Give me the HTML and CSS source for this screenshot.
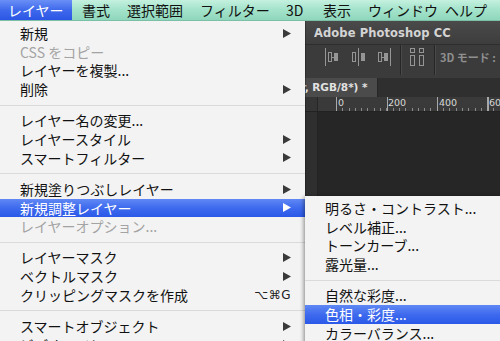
FILE: index.html
```html
<!DOCTYPE html>
<html lang="ja">
<head>
<meta charset="utf-8">
<link rel="stylesheet" href="styles.css">
</head>
<body>
<div class="screen">
  <div class="menubar">
    <span class="mb-item active">レイヤー</span>
    <span class="mb-item">書式</span>
    <span class="mb-item">選択範囲</span>
    <span class="mb-item">フィルター</span>
    <span class="mb-item">3D</span>
    <span class="mb-item">表示</span>
    <span class="mb-item">ウィンドウ</span>
    <span class="mb-item">ヘルプ</span>
  </div>
  <div class="below">
    <div class="menu">
      <div class="item"><span>新規</span><svg class="arrow" viewBox="0 0 8 9"><path d="M0 0 L8 4.5 L0 9 Z"/></svg></div>
      <div class="item disabled"><span>CSS をコピー</span></div>
      <div class="item"><span>レイヤーを複製...</span></div>
      <div class="item"><span>削除</span><svg class="arrow" viewBox="0 0 8 9"><path d="M0 0 L8 4.5 L0 9 Z"/></svg></div>
      <div class="sep"></div>
      <div class="item"><span>レイヤー名の変更...</span></div>
      <div class="item"><span>レイヤースタイル</span><svg class="arrow" viewBox="0 0 8 9"><path d="M0 0 L8 4.5 L0 9 Z"/></svg></div>
      <div class="item"><span>スマートフィルター</span><svg class="arrow" viewBox="0 0 8 9"><path d="M0 0 L8 4.5 L0 9 Z"/></svg></div>
      <div class="sep"></div>
      <div class="item"><span>新規塗りつぶしレイヤー</span><svg class="arrow" viewBox="0 0 8 9"><path d="M0 0 L8 4.5 L0 9 Z"/></svg></div>
      <div class="item selected"><span>新規調整レイヤー</span><svg class="arrow" viewBox="0 0 8 9"><path d="M0 0 L8 4.5 L0 9 Z"/></svg></div>
      <div class="item disabled"><span>レイヤーオプション...</span></div>
      <div class="sep"></div>
      <div class="item"><span>レイヤーマスク</span><svg class="arrow" viewBox="0 0 8 9"><path d="M0 0 L8 4.5 L0 9 Z"/></svg></div>
      <div class="item"><span>ベクトルマスク</span><svg class="arrow" viewBox="0 0 8 9"><path d="M0 0 L8 4.5 L0 9 Z"/></svg></div>
      <div class="item"><span>クリッピングマスクを作成</span><span class="shortcut">⌥⌘G</span></div>
      <div class="sep"></div>
      <div class="item"><span>スマートオブジェクト</span><svg class="arrow" viewBox="0 0 8 9"><path d="M0 0 L8 4.5 L0 9 Z"/></svg></div>
      <div class="item"><span>ビデオレイヤー</span><svg class="arrow" viewBox="0 0 8 9"><path d="M0 0 L8 4.5 L0 9 Z"/></svg></div>
    </div>
    <div class="ps">
      <div class="ps-title">Adobe Photoshop CC</div>
      <div class="ps-toolbar">
        <div class="tool t1">
          <i class="bar"></i><i class="box"></i><i class="tick"></i><i class="blk"></i>
        </div>
        <div class="tool t2">
          <i class="box"></i><i class="bar mid"></i><i class="blk"></i>
        </div>
        <div class="tool t3">
          <i class="box"></i><i class="tick"></i><i class="blk"></i><i class="bar end"></i>
        </div>
        <span class="vsep v1"></span>
        <div class="tool t4">
          <div class="col"><i class="sq"></i><i class="tall"></i></div>
          <div class="col"><i class="sq"></i><i class="tall"></i></div>
        </div>
        <span class="vsep v2"></span>
        <span class="mode">3D モード :</span>
      </div>
      <div class="ps-tabs">
        <div class="tab">r, RGB/8*) *</div>
      </div>
      <div class="ruler">
        <div class="ruler-corner"></div>
        <div class="ruler-scale">
          <span class="num n0">0</span>
          <span class="num n200">200</span>
          <span class="num n400">400</span>
          <span class="num n600">600</span>
        </div>
      </div>
      <div class="canvas">
        <div class="vruler"></div>
      </div>
    </div>
  </div>
  <div class="submenu">
    <div class="item"><span>明るさ・コントラスト...</span></div>
    <div class="item"><span>レベル補正...</span></div>
    <div class="item"><span>トーンカーブ...</span></div>
    <div class="item"><span>露光量...</span></div>
    <div class="sep"></div>
    <div class="item"><span>自然な彩度...</span></div>
    <div class="item selected"><span>色相・彩度...</span></div>
    <div class="item"><span>カラーバランス...</span></div>
    <div class="item"><span>白黒...</span></div>
  </div>
</div>
</body>
</html>
```

FILE: styles.css
```css
* { box-sizing: border-box; }
html, body {
  margin: 0;
  padding: 0;
  width: 500px;
  height: 341px;
  overflow: hidden;
  background: #282828;
}
.screen {
  position: relative;
  width: 500px;
  height: 341px;
  overflow: hidden;
  font-family: "Noto Sans CJK JP", "Noto Sans", sans-serif;
}
.menubar {
  height: 21px;
  display: grid;
  grid-template-columns: 82px 45px 73px 86px 37px 45px 77px 1fr;
  align-items: stretch;
  background: linear-gradient(to bottom, #c4f1df 0%, #a5e4cc 45%, #8fd7bc 100%);
  border-bottom: 1px solid #7cbfa7;
  font-size: 14px;
  line-height: 20px;
  color: #111;
  white-space: nowrap;
}
.mb-item { display: block; overflow: hidden; }
.mb-item.active {
  width: 72px;
  padding-left: 8px;
  color: #fff;
  background: linear-gradient(to bottom, #6a8ff6 0%, #3f69ec 50%, #2b56e4 100%);
}
.below {
  display: flex;
  height: 320px;
}
.menu {
  width: 305px;
  flex: none;
  background: #f3f3f3;
  padding-top: 3px;
  box-shadow: 1px 0 0 rgba(0,0,0,0.25);
  position: relative;
  z-index: 2;
}
.item {
  height: 18.7px;
  line-height: 18.7px;
  padding-left: 20px;
  padding-right: 14px;
  font-size: 14px;
  color: #111;
  display: flex;
  justify-content: space-between;
  align-items: center;
  white-space: nowrap;
}
.item.disabled { color: #a3a3a3; }
.item.selected {
  color: #fff;
  background: linear-gradient(to bottom, #6088f4 0%, #3e6aee 50%, #2a59e8 100%);
}
.arrow {
  width: 8px;
  height: 9px;
  fill: #3a3a3a;
}
.item.selected .arrow { fill: #fff; }
.shortcut {
  font-family: "DejaVu Sans", sans-serif;
  font-size: 12px;
  color: #222;
  letter-spacing: 0.5px;
}
.sep {
  height: 1px;
  margin: 5.75px 0;
  background: #dadada;
}
.ps {
  flex: 1;
  display: flex;
  flex-direction: column;
  background: #282828;
}
.ps-title {
  height: 24px;
  line-height: 24px;
  padding-left: 9px;
  background: linear-gradient(to bottom, #4a4a4a, #3d3d3d);
  color: #d4d4d4;
  font-family: "DejaVu Sans", sans-serif;
  font-weight: bold;
  font-size: 11.5px;
  letter-spacing: 0.1px;
  border-bottom: 1px solid #2e2e2e;
}
.ps-toolbar {
  height: 33px;
  background: #3b3b3b;
  display: flex;
  align-items: flex-start;
  padding-left: 20px;
  padding-top: 3px;
}
.tool {
  flex: none;
  height: 18px;
  display: flex;
  align-items: center;
}
.tool i { display: block; flex: none; }
.tool .bar { width: 1px; height: 18px; background: #959595; margin-right: 2px; }
.tool .bar.mid { margin: 0 2px; }
.tool .bar.end { margin: 0 0 0 2px; }
.tool .box { width: 4px; height: 10px; border: 1px solid #959595; }
.tool .tick { width: 2px; height: 1px; background: #959595; }
.tool .blk { width: 4px; height: 8px; background: #959595; }
.tool .col { display: flex; flex-direction: column; gap: 2px; align-self: flex-start; }
.tool .col + .col { margin-left: 4px; }
.tool .sq { width: 5px; height: 5px; border: 1px solid #959595; }
.tool .tall { width: 5px; height: 11px; border: 1px solid #959595; }
.t1 { margin-right: 14px; }
.t2 { margin-right: 13px; }
.t3 { margin-right: 9px; }
.t4 { margin-right: 10px; }
.vsep {
  flex: none;
  width: 1px;
  height: 30px;
  background: #262626;
  box-shadow: 1px 0 0 #4a4a4a;
  margin-top: -3px;
}
.v1 { margin-right: 9px; }
.v2 { margin-right: 5px; }
.mode {
  font-family: "Noto Sans CJK JP", sans-serif;
  font-weight: bold;
  font-size: 11px;
  color: #8f8f8f;
  line-height: 18px;
  white-space: nowrap;
}
.ps-tabs {
  height: 19px;
  background: #2f2f2f;
  display: flex;
}
.tab {
  width: 73px;
  background: #4b4b4b;
  color: #e2e2e2;
  font-family: "DejaVu Sans", sans-serif;
  font-weight: bold;
  font-size: 10.5px;
  line-height: 19px;
  white-space: nowrap;
  overflow: hidden;
  text-indent: -4px;
  border-right: 1px solid #262626;
}
.ruler {
  height: 15px;
  display: flex;
  background: #3a3a3a;
  border-bottom: 1px solid #222;
}
.ruler-corner {
  width: 13px;
  background: #353535;
  border-right: 1px solid #262626;
}
.ruler-scale {
  flex: 1;
  position: relative;
  background:
    repeating-linear-gradient(to right, #a8a8a8 0 1px, transparent 1px 50.5px) 18px 0 / 100% 100% no-repeat,
    repeating-linear-gradient(to right, #8a8a8a 0 1px, transparent 1px 6.3px) 18px 11px / 100% 4px no-repeat,
    #3a3a3a;
}
.num {
  position: absolute;
  top: 0;
  font-family: "DejaVu Sans", sans-serif;
  font-size: 9.5px;
  line-height: 11px;
  color: #d8d8d8;
}
.n0 { left: 20px; }
.n200 { left: 70px; }
.n400 { left: 121px; }
.n600 { left: 171px; }
.canvas {
  flex: 1;
  display: flex;
  background: #262626;
}
.vruler {
  width: 13px;
  background: #2f2f2f;
  border-right: 1px solid #222;
}
.submenu {
  position: absolute;
  left: 305px;
  top: 196px;
  width: 200px;
  height: 160px;
  background: #f3f3f3;
  border-radius: 0 5px 0 0;
  padding-top: 3px;
  box-shadow: -1px 1px 4px rgba(0,0,0,0.45);
  z-index: 3;
}
.submenu .item { padding-left: 20px; }
```
